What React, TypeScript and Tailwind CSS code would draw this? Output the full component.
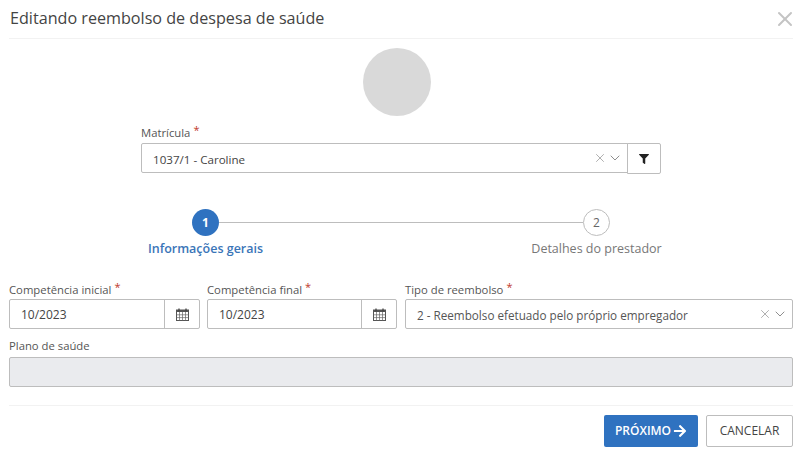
import React from 'react';
import { ChevronDown, X } from 'lucide-react';
import { FaArrowRight, FaFilter } from 'react-icons/fa';

const Label = ({ text, required }: { text: string; required?: boolean }) => (
  <div className="flex h-[14px] items-end text-[11.3px] leading-[14px] text-[#555]">
    <span>{text}</span>
    {required && <span className="relative top-[-5px] ml-[3px] text-[11px] leading-[11px] text-[#c0392b]">*</span>}
  </div>
);

const CalendarIcon = () => (
  <svg width="13" height="13" viewBox="0 0 13 13" fill="none">
    <rect x="0.5" y="2" width="12" height="10.5" fill="#fff" stroke="#555" />
    <rect x="0.5" y="2" width="12" height="2" fill="#555" />
    <path d="M3 .5v3M10 .5v3" stroke="#444" strokeWidth="1.3" />
    <path d="M3.5 4v8.5M6.5 4v8.5M9.5 4v8.5M.5 6.8h12M.5 9.6h12" stroke="#666" strokeWidth="0.7" />
  </svg>
);

const DateField = ({ label }: { label: string }) => (
  <div>
    <Label text={label} required />
    <div className="mt-[2px] flex h-[30px] rounded-[2px] border border-[#bdbdbd] bg-white">
      <div className="flex flex-1 items-center pl-[11px] pt-[2px] text-[12px] text-[#444]">10/2023</div>
      <div className="flex w-[35px] items-center justify-center border-l border-[#bdbdbd]">
        <CalendarIcon />
      </div>
    </div>
  </div>
);

const SelectIcons = () => (
  <div className="flex items-center text-[#777]">
    <X className="h-[14px] w-[14px]" strokeWidth={1} />
    <ChevronDown className="h-[16px] w-[16px]" strokeWidth={1.25} />
  </div>
);

export default function App() {
  return (
    <div className="h-[454px] w-[802px] overflow-hidden bg-white px-[9px] font-['Open_Sans',sans-serif]">
      {/* Header */}
      <div className="flex h-[39px] items-start justify-between border-b border-[#f2f2f2] pt-[7px]">
        <h1 className="pl-[1px] text-[16.15px] leading-[22px] text-[#444]">Editando reembolso de despesa de saúde</h1>
        <X className="-mr-[4px] -mt-[0px] h-[24px] w-[24px] text-[#c4c4c4]" strokeWidth={2} />
      </div>

      {/* Avatar + matricula */}
      <div className="mt-[9px] flex justify-center pr-[9px]">
        <div className="h-[68px] w-[68px] rounded-full bg-[#d9d9d9]" />
      </div>
      <div className="mx-auto mt-[10px] w-[520px]">
        <Label text="Matrícula" required />
        <div className="mt-[3px] flex">
          <div className="flex h-[30px] flex-1 items-center justify-between rounded-l-[2px] border border-[#bdbdbd] pl-[11px] pr-[4px] text-[11.6px] text-[#444]">
            <span className="pt-[3px]">1037/1 - Caroline</span>
            <SelectIcons />
          </div>
          <div className="-ml-px flex h-[31px] w-[34px] items-center justify-center rounded-r-[2px] border border-[#bdbdbd] text-[#222]">
            <FaFilter className="h-[10px] w-[10px]" />
          </div>
        </div>
      </div>

      {/* Stepper */}
      <div className="mx-auto mt-[35px] flex w-[418px] items-center">
        <div className="flex h-[27px] w-[27px] items-center justify-center rounded-full bg-[#2f72c0] text-[12px] font-bold text-white">1</div>
        <div className="h-px flex-1 bg-[#bdbdbd]" />
        <div className="flex h-[27px] w-[27px] items-center justify-center rounded-full border border-[#bdbdbd] text-[12px] text-[#666]">2</div>
      </div>
      <div className="mx-auto mt-[4px] flex w-[551px] justify-between text-[12.5px] leading-[18px]">
        <div className="w-[160px] text-center font-semibold text-[#3a75b8]">Informações gerais</div>
        <div className="w-[160px] text-center text-[#777]">Detalhes do prestador</div>
      </div>

      {/* Form */}
      <div className="mt-[25px] grid grid-cols-[191px_190px_389px] gap-x-[7px]">
        <DateField label="Competência inicial" />
        <DateField label="Competência final" />
        <div className="pl-[1px]">
          <Label text="Tipo de reembolso" required />
          <div className="mt-[2px] flex h-[30px] items-center justify-between rounded-[2px] border border-[#bdbdbd] pl-[11px] pr-[4px] text-[11.7px] text-[#555]">
            <span className="pt-[3px]">2 - Reembolso efetuado pelo próprio empregador</span>
            <SelectIcons />
          </div>
        </div>
      </div>
      <div className="mt-[10px]">
        <Label text="Plano de saúde" />
        <div className="mt-[4px] h-[30px] rounded-[2px] border border-[#bdbdbd] bg-[#eaebee]" />
      </div>

      {/* Footer */}
      <div className="mt-[18px] flex justify-end gap-[8px] border-t border-[#f2f2f2] pt-[9px]">
        <button className="flex h-[32px] w-[94px] items-center justify-center gap-[2px] rounded-[2px] bg-[#2f72c0] text-[12px] font-semibold text-white">
          PRÓXIMO
          <FaArrowRight className="h-[14px] w-[14px]" />
        </button>
        <button className="h-[32px] w-[87px] rounded-[2px] border border-[#bdbdbd] bg-white text-[12px] text-[#444]">CANCELAR</button>
      </div>
    </div>
  );
}
